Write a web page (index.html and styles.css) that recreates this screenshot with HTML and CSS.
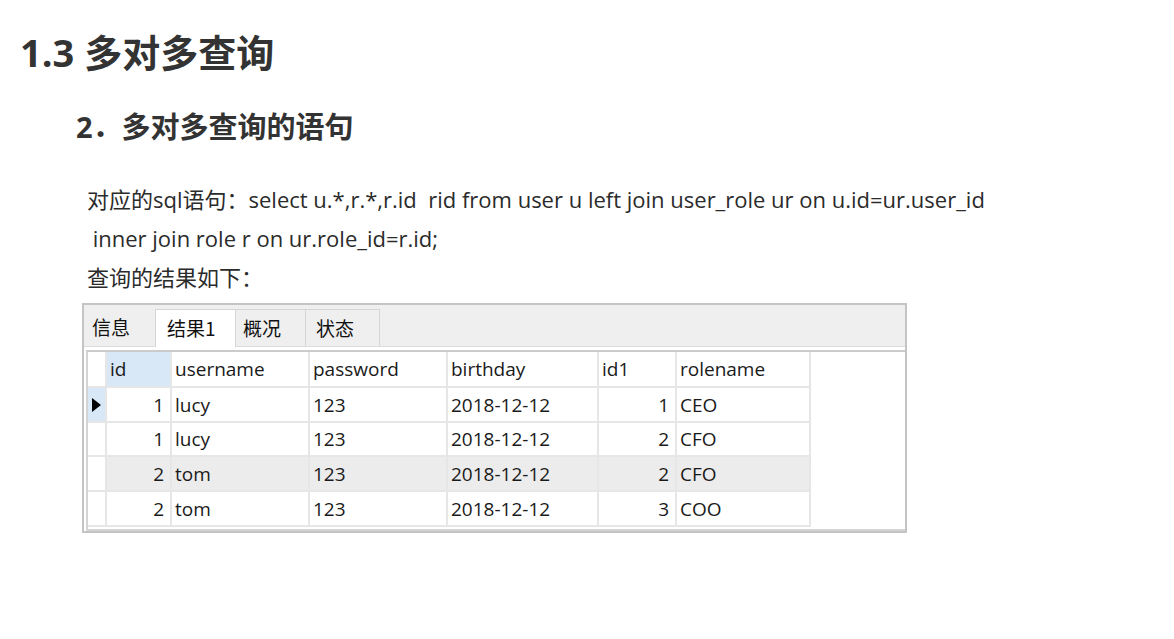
FILE: index.html
```html
<!DOCTYPE html>
<html lang="zh-CN">
<head>
<meta charset="utf-8">
<title>1.3 多对多查询</title>
<link rel="stylesheet" href="styles.css">
</head>
<body>
<h1 class="h1">1.3 多对多查询</h1>
<h2 class="h2">2．多对多查询的语句</h2>
<div class="para">
  <div class="line">对应的sql语句：select u.*,r.*,r.id  rid from user u left join user_role ur on u.id=ur.user_id</div>
  <div class="line"> inner join role r on ur.role_id=r.id;</div>
  <div class="line">查询的结果如下：</div>
</div>
<div class="widget">
  <div class="tabbar">
    <div class="tab tab-info">信息</div>
    <div class="tab tab-result active">结果1</div>
    <div class="tab tab-overview bordered">概况</div>
    <div class="tab tab-status bordered">状态</div>
  </div>
  <div class="grid">
    <table class="tbl">
      <colgroup>
        <col class="c-ind"><col class="c-id"><col class="c-user"><col class="c-pass"><col class="c-birth"><col class="c-id1"><col class="c-role">
      </colgroup>
      <thead>
        <tr class="head">
          <th class="ind"></th><th class="sel">id</th><th>username</th><th>password</th><th>birthday</th><th>id1</th><th>rolename</th>
        </tr>
      </thead>
      <tbody>
        <tr class="r1">
          <td class="ind cur"><span class="arrow"></span></td><td class="num">1</td><td>lucy</td><td>123</td><td>2018-12-12</td><td class="num">1</td><td>CEO</td>
        </tr>
        <tr class="r2">
          <td class="ind"></td><td class="num">1</td><td>lucy</td><td>123</td><td>2018-12-12</td><td class="num">2</td><td>CFO</td>
        </tr>
        <tr class="r3 alt">
          <td class="ind"></td><td class="num">2</td><td>tom</td><td>123</td><td>2018-12-12</td><td class="num">2</td><td>CFO</td>
        </tr>
        <tr class="r4">
          <td class="ind"></td><td class="num">2</td><td>tom</td><td>123</td><td>2018-12-12</td><td class="num">3</td><td>COO</td>
        </tr>
      </tbody>
    </table>
  </div>
</div>
</body>
</html>
```
FILE: styles.css
```css
html, body {
  margin: 0;
  padding: 0;
  background: #ffffff;
}

body {
  font-family: "Open Sans", "Noto Sans CJK SC", sans-serif;
  color: #333333;
  width: 1174px;
  height: 639px;
  overflow: hidden;
}

.h1 {
  margin: 0;
  padding: 30px 0 0 20px;
  font-size: 38px;
  line-height: 44px;
  font-weight: 700;
  color: #333333;
}

.h2 {
  margin: 35px 0 0 76px;
  font-size: 29px;
  line-height: 36px;
  font-weight: 700;
  color: #333333;
}

.para {
  margin: 35px 0 0 87px;
  font-size: 22px;
  line-height: 39px;
  color: #2b2b2b;
}

.line {
  white-space: pre;
}

.widget {
  margin: 6px 0 0 82px;
  width: 825px;
  height: 230px;
  box-sizing: border-box;
  border: 2px solid #c4c4c4;
  background: #ffffff;
  display: flex;
  flex-direction: column;
}

.tabbar {
  height: 42px;
  flex: none;
  box-sizing: border-box;
  background: #efefef;
  border-bottom: 1px solid #dcdcdc;
  display: flex;
  align-items: flex-end;
  font-family: "Noto Sans CJK SC", sans-serif;
  font-size: 19px;
  color: #111111;
}

.tab {
  height: 37px;
  box-sizing: border-box;
  padding: 0 0 0 8px;
  line-height: 36px;
  white-space: nowrap;
}

.tab-info { width: 71px; }
.tab-result { width: 81px; }
.tab-overview { width: 70px; }
.tab-status { width: 74px; }

.tab.active {
  background: #ffffff;
  border: 1px solid #d6d6d6;
  border-bottom: none;
  height: 38px;
  margin-bottom: -1px;
  padding-left: 11px;
}

.tab.bordered {
  border-top: 1px solid #d6d6d6;
  border-right: 1px solid #d6d6d6;
  padding-left: 7px;
}

.tab.tab-status {
  padding-left: 10px;
}

.grid {
  flex: 1;
  margin: 3px 0 0 2px;
  border-top: 2px solid #cbcbcb;
  border-left: 2px solid #d4d4d4;
  border-bottom: 2px solid #d4d4d4;
  background: #ffffff;
}

.tbl {
  border-collapse: collapse;
  table-layout: fixed;
  width: 722px;
  font-family: "Open Sans", "Noto Sans CJK SC", sans-serif;
  font-size: 19px;
  color: #1a1a1a;
}

.c-ind { width: 18px; }
.c-id { width: 65px; }
.c-user { width: 138px; }
.c-pass { width: 138px; }
.c-birth { width: 151px; }
.c-id1 { width: 78px; }
.c-role { width: 134px; }

.tbl th,
.tbl td {
  box-sizing: border-box;
  border-right: 2px solid #e6e6e6;
  border-bottom: 2px solid #e6e6e6;
  padding: 0 3px;
  text-align: left;
  font-weight: 400;
  white-space: nowrap;
  overflow: hidden;
}

.tbl tr {
  height: 35px;
}

.tbl tr.r2 {
  height: 34px;
}

.tbl th.sel {
  background: #d9e8f7;
}

.tbl td.num {
  text-align: right;
  padding-right: 6px;
}

.tbl tr.alt td {
  background: #ececec;
}

.tbl tr.alt td.ind,
.tbl td.ind,
.tbl th.ind {
  background: #ffffff;
  padding: 0;
}

.tbl td.ind.cur {
  background: #d9e8f7;
}

.arrow {
  display: block;
  width: 0;
  height: 0;
  margin-left: 4px;
  border-top: 7px solid transparent;
  border-bottom: 7px solid transparent;
  border-left: 9px solid #000000;
}
```
